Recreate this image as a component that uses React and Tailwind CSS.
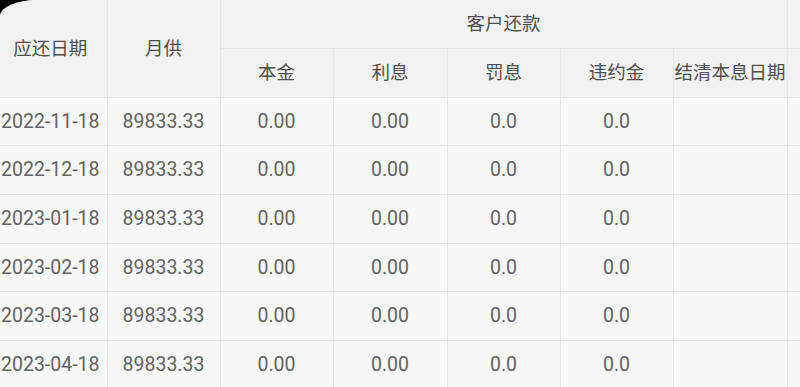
import React from 'react';

const rows = [
  '2022-11-18',
  '2022-12-18',
  '2023-01-18',
  '2023-02-18',
  '2023-03-18',
  '2023-04-18',
];

const subHeads = ['本金', '利息', '罚息', '违约金', '结清本息日期'];

function App() {
  return (
    <div className="w-[800px] h-[387px] bg-black overflow-hidden">
      <div
        className="w-full h-full bg-[#f8f8f8] rounded-tl-[38px_16px] overflow-hidden"
        style={{ fontFamily: 'Roboto, "Noto Sans CJK SC", sans-serif' }}
      >
        <table className="-ml-[6px] border-collapse table-fixed w-[820px]">
          <colgroup>
            <col className="w-[113px]" />
            <col className="w-[113px]" />
            <col className="w-[113px]" />
            <col className="w-[114px]" />
            <col className="w-[113px]" />
            <col className="w-[113px]" />
            <col className="w-[114px]" />
            <col className="w-[27px]" />
          </colgroup>
          <thead className="bg-[#f1f1f1] text-[18.5px] text-[#4f4f4f]">
            <tr className="h-[48px]">
              <th rowSpan={2} className="font-normal border-r border-b border-[#e6e6e6] pt-[4px]">应还日期</th>
              <th rowSpan={2} className="font-normal border-r border-b border-[#e6e6e6] pt-[4px]">月供</th>
              <th colSpan={5} className="font-normal border-b border-r border-[#e6e6e6] pt-[3px]">客户还款</th>
              <th className="border-b border-[#e6e6e6]"></th>
            </tr>
            <tr className="h-[49px]">
              {subHeads.map((h) => (
                <th key={h} className="font-normal border-r border-b border-[#e6e6e6] whitespace-nowrap pt-[3px]">
                  {h}
                </th>
              ))}
              <th className="border-b border-[#e6e6e6]"></th>
            </tr>
          </thead>
          <tbody className="text-[19.5px] text-[#636363] text-center">
            {rows.map((d) => (
              <tr key={d} className="h-[48.7px]">
                <td className="border-r border-b border-[#e6e6e6] whitespace-nowrap">{d}</td>
                <td className="border-r border-b border-[#e6e6e6]">89833.33</td>
                <td className="border-r border-b border-[#e6e6e6]">0.00</td>
                <td className="border-r border-b border-[#e6e6e6]">0.00</td>
                <td className="border-r border-b border-[#e6e6e6]">0.0</td>
                <td className="border-r border-b border-[#e6e6e6]">0.0</td>
                <td className="border-r border-b border-[#e6e6e6]"></td>
                <td className="border-b border-[#e6e6e6]"></td>
              </tr>
            ))}
          </tbody>
        </table>
      </div>
    </div>
  );
}

export default App;
